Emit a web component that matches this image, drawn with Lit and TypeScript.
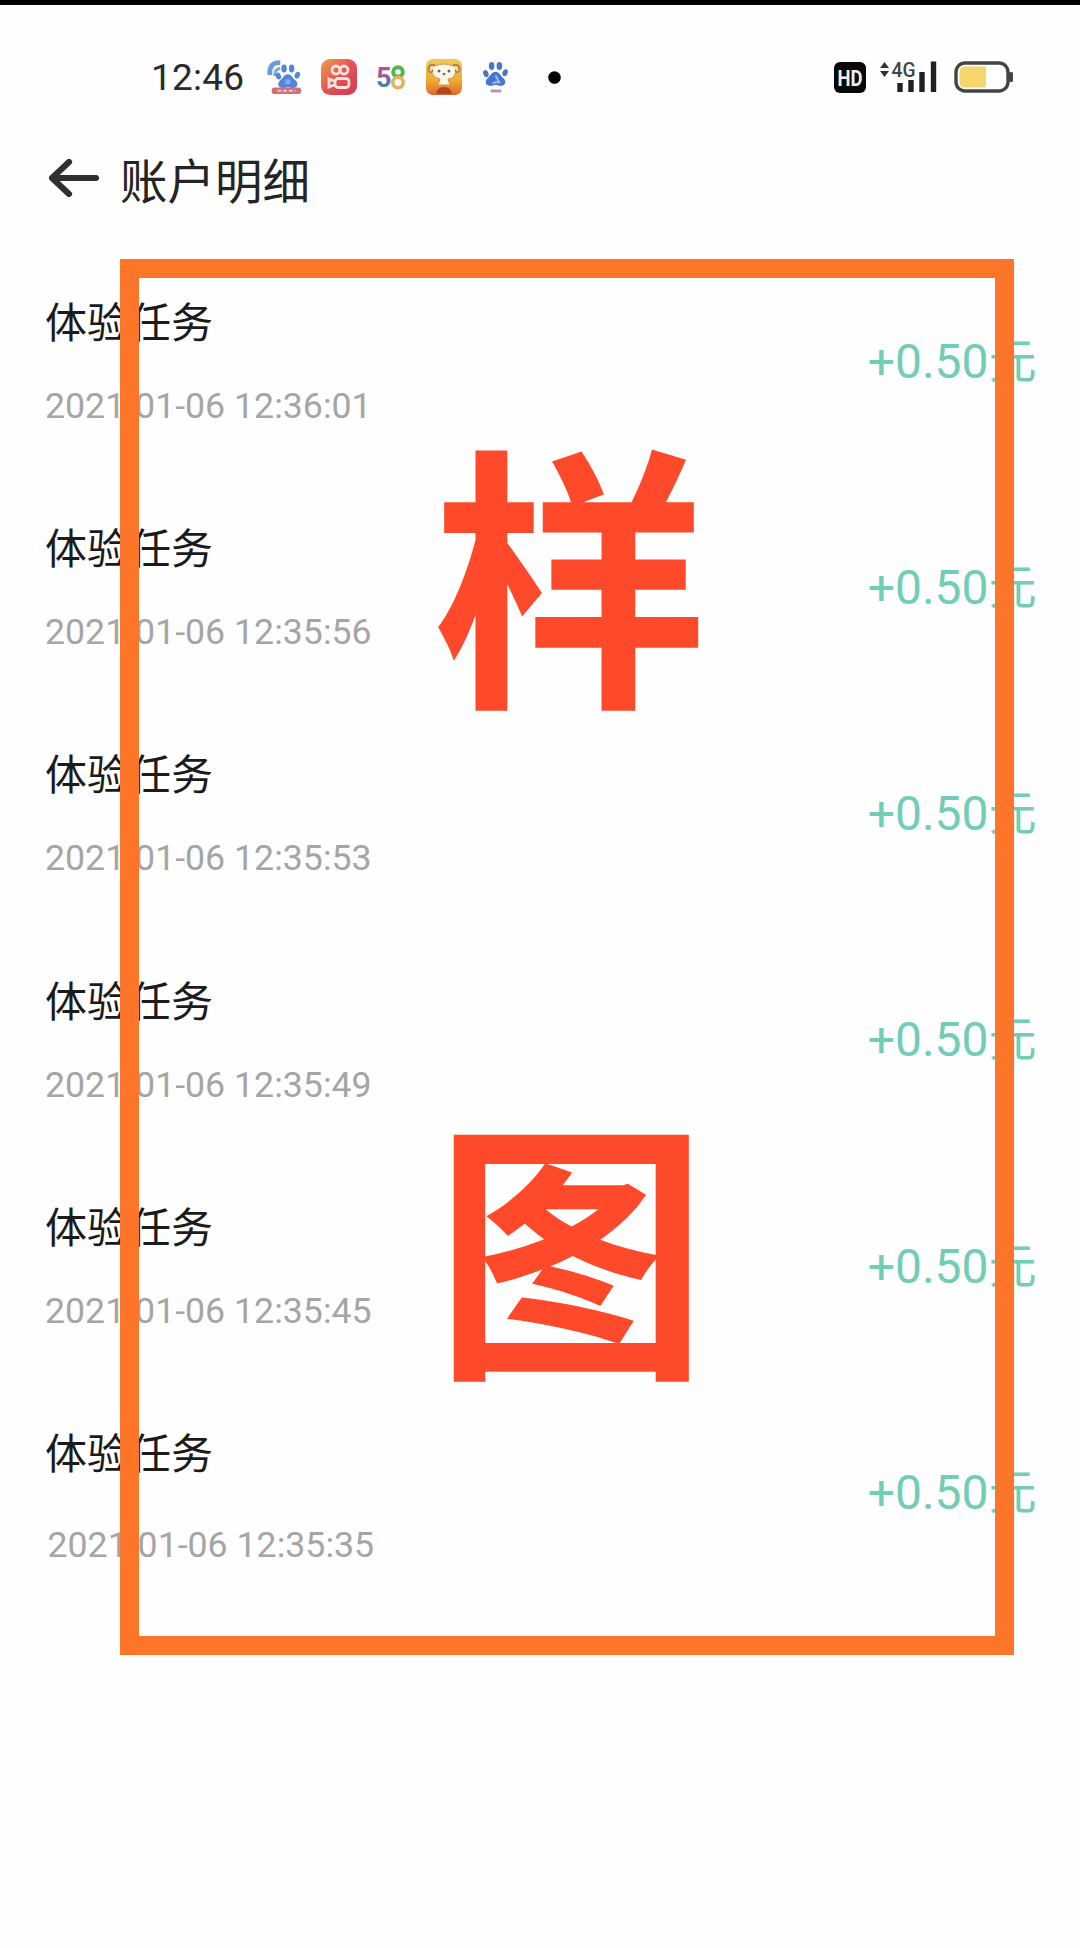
import { LitElement, html, css, svg } from "lit";
import { customElement, property } from "lit/decorators.js";

interface Entry {
  title: string;
  time: string;
  amount: string;
}

const times = ["12:36:01", "12:35:56", "12:35:53", "12:35:49", "12:35:45", "12:35:35"];
const entries: Entry[] = times.map((t) => ({
  title: "体验任务",
  time: `2021-01-06 ${t}`,
  amount: "+0.50元",
}));

const paw = svg`
  <ellipse cx="4" cy="14" rx="2.7" ry="3.7" transform="rotate(-20 4 14)"/>
  <ellipse cx="10" cy="6" rx="2.9" ry="4.2"/>
  <ellipse cx="18" cy="6" rx="2.9" ry="4.2"/>
  <ellipse cx="24" cy="13" rx="2.7" ry="3.7" transform="rotate(20 24 13)"/>
  <path d="M14 12c4 0 5 4 8 6.500c4 3.500 2 8-2 8c-2.500 0-4-.8-6-.8s-3.500.8-6 .8c-4 0-6-4.500-2-8c3-2.500 4-6.500 8-6.500z"/>`;

@customElement("status-bar")
class StatusBar extends LitElement {
  static styles = css`
    :host { display: flex; align-items: center; height: 144px; box-sizing: border-box; padding: 0 66px 0 151px; font-family: Roboto, "Liberation Sans", sans-serif; }
    svg { display: block; flex: none; overflow: visible; }
    .clock { font-size: 37px; line-height: 40px; padding-top: 2px; width: 115px; color: #2a2a2a; letter-spacing: 0.2px; }
    .apps { display: flex; align-items: center; flex: 1; }
    .live { margin-right: 17px; }
    .video { margin-right: 20px; }
    .five { margin-right: 20px; }
    .dog { margin-right: 21px; }
    .paw { margin-right: 40px; }
    .hd { margin-right: 13px; }
    .signal { margin-right: 17px; }
  `;
  render() {
    return html`
      <div class="clock">12:46</div>
      <div class="apps">
        <svg class="live" width="38" height="36" viewBox="0 0 40 38">
          <path d="M4 17Q3 3 15 4" fill="none" stroke="#6e9bd8" stroke-width="5"/>
          <path d="M9 18Q9 10 15 10" fill="none" stroke="#80a8df" stroke-width="3"/>
          <g transform="translate(9 4)" fill="#5385d8">${paw}</g>
          <circle cx="23" cy="24" r="3" fill="#83a9ec"/>
          <rect x="6" y="30" width="31" height="7" rx="3" fill="#cf6f78"/>
          <path d="M12 33.500H31" stroke="#f4c6c6" stroke-width="2" stroke-dasharray="4 2"/>
        </svg>
        <svg class="video" width="36" height="36" viewBox="0 0 36 36">
          <defs><linearGradient id="v" x1="0" y1="0" x2="1" y2="1"><stop offset="0" stop-color="#eda04a"/><stop offset=".5" stop-color="#e25554"/><stop offset="1" stop-color="#d43558"/></linearGradient></defs>
          <rect width="36" height="36" rx="9" fill="url(#v)"/>
          <g fill="none" stroke="#ffe3df" stroke-width="2.800">
            <circle cx="15" cy="11" r="4"/><circle cx="23" cy="11" r="4"/>
            <rect x="14" y="19.500" width="14" height="9" rx="3"/>
            <path d="M13 22L8 20V28L13 26"/>
          </g>
        </svg>
        <svg class="five" width="29" height="24" viewBox="0 0 29 24">
          <defs><linearGradient id="f" x1="0" y1="0" x2="0" y2="1"><stop offset=".3" stop-color="#b95096"/><stop offset=".62" stop-color="#5774b0"/><stop offset=".9" stop-color="#28a69b"/></linearGradient></defs>
          <text x="-1" y="22" font-size="27" font-weight="700" fill="url(#f)">5</text>
          <circle cx="21" cy="7" r="4.800" fill="none" stroke="#4fb945" stroke-width="4"/>
          <circle cx="21" cy="17.500" r="5.200" fill="none" stroke="#e7b060" stroke-width="3.600"/>
        </svg>
        <svg class="dog" width="36" height="36" viewBox="0 0 36 36">
          <defs><linearGradient id="d" x1="0" y1="0" x2="0" y2="1"><stop offset="0" stop-color="#efca58"/><stop offset=".6" stop-color="#f1aa2f"/><stop offset="1" stop-color="#e0662a"/></linearGradient></defs>
          <rect width="36" height="36" rx="7" fill="url(#d)"/>
          <path d="M9 7Q18 3 27 7Q32 10 29 15Q27 20 22 20L24 26H12L14 20Q8 19 6 14Q5 9 9 7Z" fill="#fff8e8" stroke="#c49b55" stroke-width="1"/>
          <path d="M9 6Q1 5 3 12Q5 15 7 11M27 6Q35 5 33 12Q31 15 29 11" fill="#f3dca0" stroke="#a9823f" stroke-width="1.800"/>
          <circle cx="13" cy="12" r="1.500" fill="#69645d"/><circle cx="23" cy="12" r="1.500" fill="#69645d"/>
          <path d="M16 14H20L18 17Z" fill="#6e7491"/>
          <path d="M10 35Q11 28 18 28Q25 28 26 35Z" fill="#ad482b"/>
        </svg>
        <svg class="paw" width="25" height="32" viewBox="1 1 26 33">
          <g fill="#4677c8">${paw}</g>
          <path d="M14 16L18 23H14L11 24" stroke="#9dbdf2" stroke-width="2" fill="none"/>
          <path d="M9 32H20" stroke="#b591be" stroke-width="3" fill="none"/>
        </svg>
        <svg width="13" height="13" viewBox="0 0 13 13"><circle cx="6.500" cy="6.500" r="6.300" fill="#000"/></svg>
      </div>
      <svg class="hd" width="32" height="31" viewBox="0 0 32 31">
        <rect width="32" height="31" rx="6" fill="#080808"/>
        <text x="16" y="23.500" text-anchor="middle" font-size="22" font-weight="700" textLength="25" lengthAdjust="spacingAndGlyphs" fill="#eee">HD</text>
      </svg>
      <svg class="signal" width="58" height="32" viewBox="0 0 58 32">
        <path d="M1 7L5.500 1L10 7ZM1 10H10L5.500 16Z" fill="#333"/>
        <text x="12.500" y="15.500" font-size="21" font-weight="500" textLength="24" lengthAdjust="spacingAndGlyphs" fill="#444">4G</text>
        <path d="M21 22V31M32 19V31M43 11V31M54.500 0.500V31" stroke="#222" stroke-width="5.400"/>
      </svg>
      <svg width="60" height="32" viewBox="0 0 60 32">
        <rect x="2" y="2" width="52" height="28" rx="9" fill="#fff" stroke="#444" stroke-width="3.400"/>
        <path d="M11 5.500H32V26.500H11Q5.500 26.500 5.500 21V11Q5.500 5.500 11 5.500Z" fill="#f5d66c"/>
        <rect x="55" y="11" width="4" height="10" rx="1.500" fill="#444"/>
      </svg>`;
  }
}

@customElement("entry-row")
class EntryRow extends LitElement {
  static styles = css`
    :host { display: flex; align-items: center; justify-content: space-between; height: 226.2px; padding: 0 43.5px 0 45px; box-sizing: border-box; font-family: Roboto, "Noto Sans CJK SC", sans-serif; white-space: nowrap; }
    .info { display: flex; flex-direction: column; gap: 44px; }
    .title { font-family: "Noto Sans CJK SC", sans-serif; font-size: 42px; line-height: 42px; color: #1b1b1b; }
    .time { font-size: 35.700px; line-height: 42px; color: #a5a5a5; }
    .amount { font-size: 48px; line-height: 48px; padding-bottom: 2.500px; color: #72cdb6; }
    :host([last]) .info { gap: 52px; margin-bottom: -8px; }
    :host([last]) .time { padding-left: 2.500px; }
  `;
  @property({ attribute: false }) entry!: Entry;
  render() {
    return html`
      <div class="info">
        <div class="title">${this.entry.title}</div>
        <div class="time">${this.entry.time}</div>
      </div>
      <div class="amount">${this.entry.amount}</div>`;
  }
}

@customElement("app-root")
class AppRoot extends LitElement {
  static styles = css`
    :host { display: block; position: relative; box-sizing: border-box; width: 1080px; height: 1948px; overflow: hidden; background: #fefefe; border-top: 5px solid #000; font-family: "Noto Sans CJK SC", sans-serif; }
    .header { display: flex; align-items: center; height: 58px; padding-left: 49px; gap: 21px; }
    .header svg { display: block; }
    .heading { font-size: 47.500px; line-height: 58px; padding-top: 1px; color: #242424; }
    .list { padding-top: 43px; }
    .frame { position: absolute; left: 120px; top: 254px; width: 894px; height: 1396px; box-sizing: border-box; border: 19px solid #fc7529; }
    .stamp { position: absolute; font-weight: 700; color: #fe4a2b; }
    .upper { left: 432px; top: 422px; font-size: 277px; line-height: 277px; }
    .lower { left: 434px; top: 1096px; font-size: 274px; line-height: 274px; }
  `;
  render() {
    return html`
      <status-bar></status-bar>
      <div class="header">
        <svg width="50" height="38" viewBox="0 0 50 38"><path d="M47 19H4M20 3L3 19L20 35" fill="none" stroke="#303030" stroke-width="6.200" stroke-linecap="round" stroke-linejoin="round"/></svg>
        <div class="heading">账户明细</div>
      </div>
      <div class="list">
        ${entries.map((e, i) => html`<entry-row .entry=${e} ?last=${i === entries.length - 1}></entry-row>`)}
      </div>
      <div class="frame"></div>
      <div class="stamp upper">样</div>
      <div class="stamp lower">图</div>`;
  }
}
